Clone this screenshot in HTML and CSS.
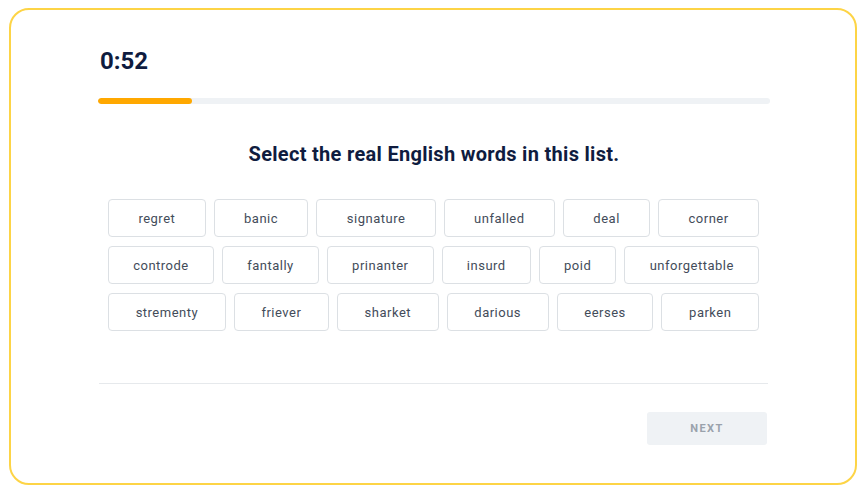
FILE: index.html
```html
<!DOCTYPE html>
<html lang="en">

<head>
    <meta charset="UTF-8">
    <meta name="viewport" content="width=device-width, initial-scale=1.0">
    <title>Word Challenge</title>
    <link rel="stylesheet" href="styles.css">
</head>

<body>
    <div class="frame">
        <div class="content">
            <!-- Timer -->
            <div class="timer">0:52</div>
            <div class="progress">
                <div class="progress-fill" style="width: 14%;"></div>
            </div>

            <h2>Select the real English words in this list.</h2>

            <!-- Word choices -->
            <div class="words">
                <div class="word-row">
                    <button class="word">regret</button>
                    <button class="word">banic</button>
                    <button class="word">signature</button>
                    <button class="word">unfalled</button>
                    <button class="word">deal</button>
                    <button class="word">corner</button>
                </div>
                <div class="word-row">
                    <button class="word">controde</button>
                    <button class="word">fantally</button>
                    <button class="word">prinanter</button>
                    <button class="word">insurd</button>
                    <button class="word">poid</button>
                    <button class="word">unforgettable</button>
                </div>
                <div class="word-row">
                    <button class="word">strementy</button>
                    <button class="word">friever</button>
                    <button class="word">sharket</button>
                    <button class="word">darious</button>
                    <button class="word">eerses</button>
                    <button class="word">parken</button>
                </div>
            </div>

            <hr class="divider">

            <div class="actions">
                <button class="next-btn">NEXT</button>
            </div>
        </div>
    </div>
</body>
</html>
```

FILE: styles.css
```css
body {
    font-family: 'Roboto', 'Liberation Sans', sans-serif;
    margin: 0;
    padding: 0;
    background-color: #FFFFFF;
    color: #0F1C3F;
}

.frame {
    box-sizing: border-box;
    margin: 8px 8px 8px 9px;
    height: 477px;
    border: 2px solid #FDD446;
    border-radius: 20px;
    padding: 37px 85px 0 87px;
}

.content {
    display: flex;
    flex-direction: column;
}

.timer {
    margin-left: 2px;
    font-size: 24px;
    font-weight: 700;
    line-height: 28px;
    color: #0F1C3F;
}

.progress {
    margin-top: 23px;
    height: 6px;
    border-radius: 3px;
    background-color: #EFF2F5;
    overflow: hidden;
}

.progress-fill {
    height: 100%;
    border-radius: 3px;
    background-color: #FFA800;
}

h2 {
    margin: 38px 0 0 0;
    font-size: 20px;
    line-height: 24px;
    font-weight: 700;
    letter-spacing: 0.3px;
    text-align: center;
    color: #0F1C3F;
}

.words {
    display: flex;
    flex-direction: column;
    gap: 9px;
    margin-top: 33px;
    padding: 0 11px 0 10px;
}

.word-row {
    display: flex;
    gap: 8px;
}

.word {
    flex: 1 1 auto;
    height: 38px;
    padding: 0 12px;
    background-color: #FFFFFF;
    border: 1px solid #DCE0E4;
    border-radius: 4px;
    font-family: inherit;
    font-size: 13px;
    font-weight: 400;
    letter-spacing: 0.5px;
    color: #434C5A;
    cursor: pointer;
}

.divider {
    margin: 52px 2px 0 1px;
    border: none;
    border-top: 1px solid #E6E9EC;
}

.actions {
    display: flex;
    justify-content: flex-end;
    margin-top: 28px;
    padding-right: 3px;
}

.next-btn {
    width: 120px;
    height: 33px;
    border: none;
    border-radius: 3px;
    background-color: #EFF2F5;
    color: #9AA2AC;
    font-family: inherit;
    font-size: 11px;
    font-weight: 700;
    letter-spacing: 1.5px;
}
```
